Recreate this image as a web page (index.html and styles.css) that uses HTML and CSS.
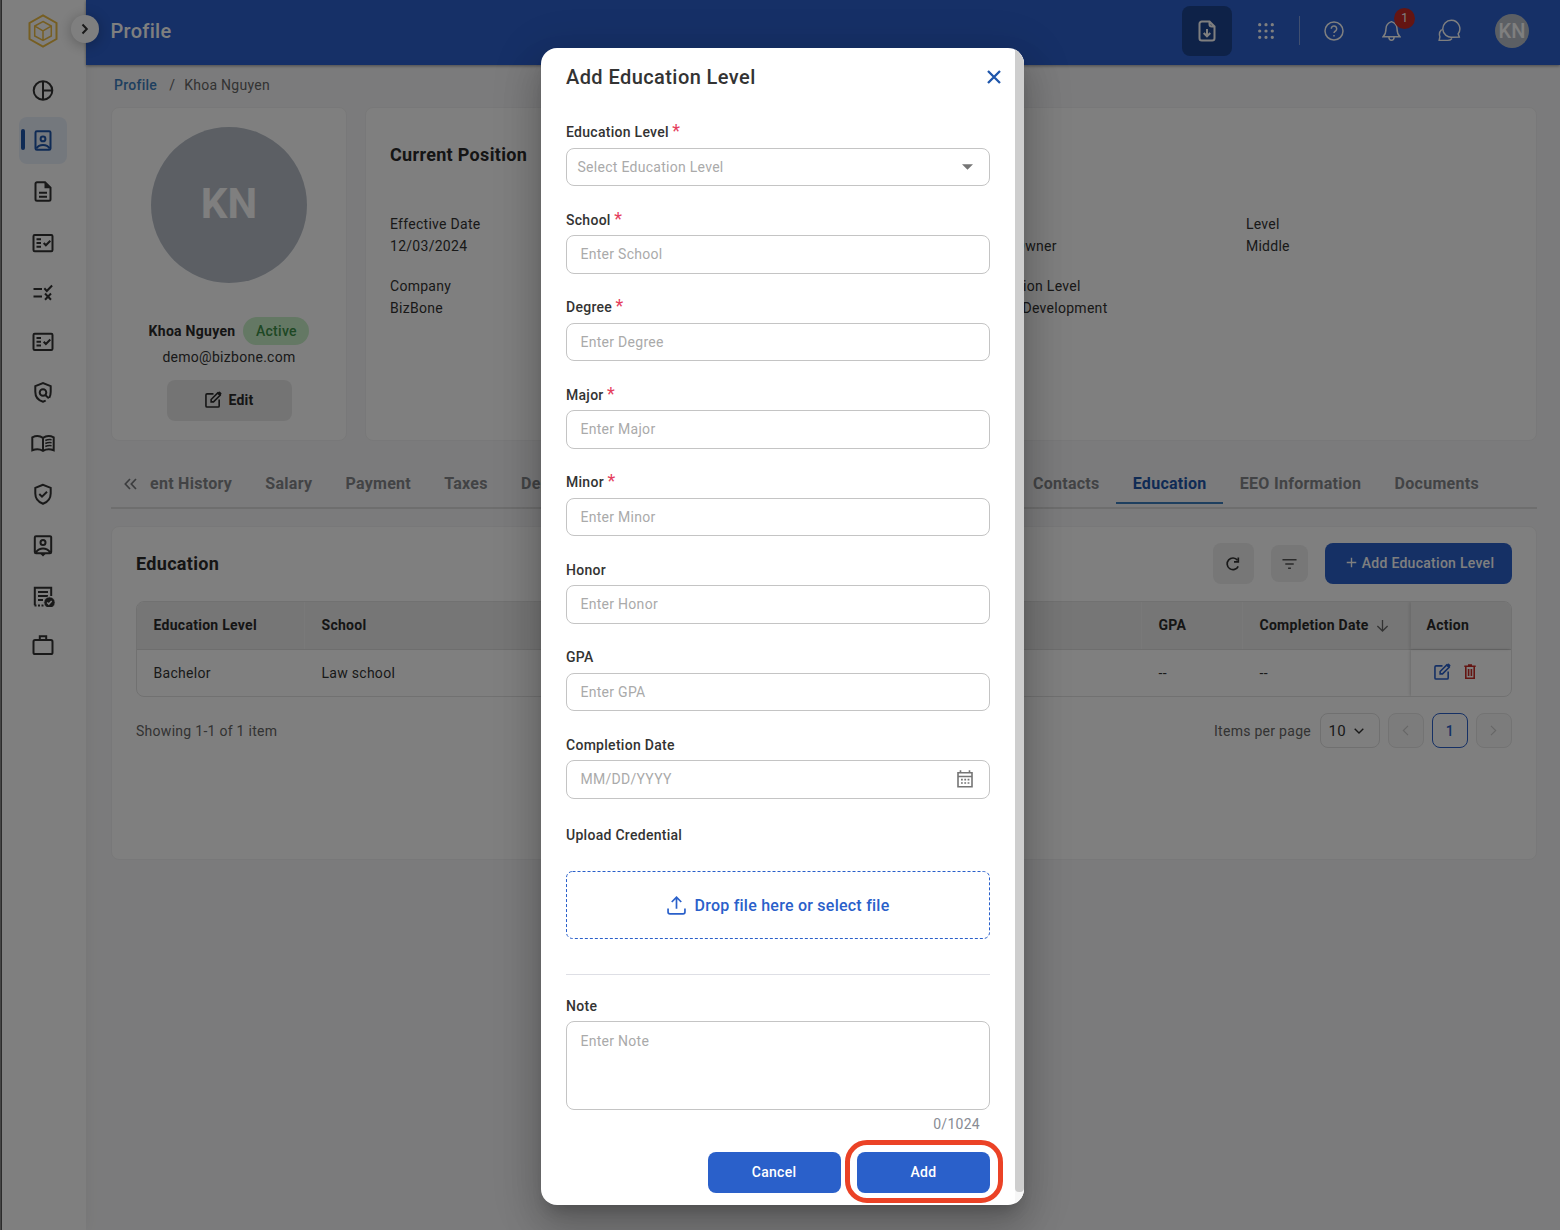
FILE: index.html
```html
<!DOCTYPE html>
<html lang="en">
<head>
<meta charset="utf-8">
<title>Profile</title>
<link rel="stylesheet" href="styles.css">
</head>
<body>
<div class="app">
  <aside class="sidebar">
    <svg class="logo" viewBox="0 0 30 34"><path d="M15 1.300 28.500 9v16L15 32.700 1.500 25V9z" stroke-width="2"/><path d="M15 7.500 23.300 12v10L15 26.500 6.700 22V12zM6.900 12.200 15 16.800l8.100-4.600M15 16.800v9.500" stroke-width="1.500"/></svg>
    <nav class="nav">
      <a class="nav-item"><svg viewBox="0 -0.500 24 24"><circle cx="12" cy="12" r="9.300"/><path d="M12 2.700v18.600M12 12h9.300"/></svg></a>
      <a class="nav-item active"><svg viewBox="0 -0.500 24 24"><rect x="4.500" y="2.700" width="15" height="18.600" rx="1.400"/><circle cx="12" cy="10.400" r="2.400"/><path d="M5.300 20c1.600-2.600 4-3.400 6.700-3.400s5.100.8 6.700 3.400"/></svg></a>
      <a class="nav-item"><svg viewBox="0 -0.500 24 24"><path d="M14 2.700H6A1.500 1.500 0 0 0 4.500 4.200v15.600A1.500 1.500 0 0 0 6 21.300h12a1.500 1.500 0 0 0 1.500-1.500V8.200zM8 13.200h8M8 17.200h8"/><path class="solid" d="M13.500 3v5.700h5.700z"/></svg></a>
      <a class="nav-item"><svg viewBox="0 -1 24 24"><rect x="2.500" y="4" width="19" height="16.200" rx="1.200"/><path d="M5.500 8.200H10M5.500 12H10M5.500 15.800H10M12.700 12l2.200 2.300 4.400-4.500"/></svg></a>
      <a class="nav-item"><svg viewBox="0 -0.500 24 24"><path d="M2.500 8.500H11M2.500 16H11M13.300 7.800l2.500 2.700 5.300-5.500M14 13l6 6.200M20 13l-6 6.200"/></svg></a>
      <a class="nav-item"><svg viewBox="0 1.300 24 24"><rect x="2.500" y="4" width="19" height="16.200" rx="1.200"/><path d="M5.500 8.200H10M5.500 12H10M5.500 15.800H10M12.700 12l2.200 2.300 4.400-4.500"/></svg></a>
      <a class="nav-item"><svg viewBox="0 1 24 24"><path d="M17.800 18.400 14.300 15M18.300 17.800c1-1.800 1.400-3.800 1.400-6.100V6.200L12 3 4.300 6.200v5.500c0 5.300 3.300 8.700 7.700 10 1-.3 1.900-.7 2.700-1.200"/><circle cx="12" cy="12.500" r="3.300"/></svg></a>
      <a class="nav-item"><svg class="book" viewBox="0 0.500 24 24"><path d="M12 6.300C9 4.300 4.500 4.300 1.300 5.800v13c3.500-1.300 7.700-1.200 10.700.6 3-1.800 7.200-1.900 10.700-.6v-13C19.500 4.300 15 4.300 12 6.300zv13"/><path d="M14.300 9c2-.9 4-1.100 6.300-.8M14.300 12c2-.9 4-1.100 6.300-.8M14.300 15c2-.9 4-1.100 6.300-.8" stroke-width="1.500"/></svg></a>
      <a class="nav-item"><svg viewBox="0 0 24 24"><path d="M12 2.800 4.300 5.900v5.500c0 5 3 8.500 7.700 10.400 4.700-1.900 7.700-5.400 7.700-10.400V5.900zM8.300 12l2.700 2.700 5-5"/></svg></a>
      <a class="nav-item"><svg viewBox="0 -0.500 24 24"><path d="M5 2.700h14a1.200 1.200 0 0 1 1.200 1.200v14.600a1.200 1.200 0 0 1-1.200 1.200H5a1.200 1.200 0 0 1-1.200-1.200V3.900A1.200 1.200 0 0 1 5 2.700zM5 18.700c2-2.600 4-3.600 7-3.600s5 1 7 3.600"/><circle cx="12" cy="9" r="2.500"/><path class="solid" d="m9 20 3 3 3-3z"/></svg></a>
      <a class="nav-item"><svg viewBox="0 -2 24 24"><path d="M20.200 11V2.700H3.800v17.600M7 7h10M7 11h10M7 15h5"/><path d="M3.500 20.500h9" stroke-dasharray="2 1.500"/><circle class="disc" cx="18.500" cy="17.500" r="5.700"/><path class="light" d="m16.200 17.500 1.600 1.600 2.900-3"/></svg></a>
      <a class="nav-item"><svg viewBox="0 0.800 24 24"><rect x="2.500" y="6.900" width="19" height="14" rx="1.600"/><path d="M8.800 6.500V3h6.400v3.500"/></svg></a>
    </nav>
  </aside>
  <div class="page">
    <header class="topbar">
      <h1>Profile</h1>
      <div class="tools">
        <span class="tool-btn"><svg viewBox="0 0 24 24"><path d="M14.500 2.500H6.800A2.300 2.300 0 0 0 4.500 4.800v14.400A2.300 2.300 0 0 0 6.800 21.500h10.400a2.300 2.300 0 0 0 2.300-2.300V7.500zv2.700A2.300 2.300 0 0 0 16.800 7.500h2.700M12 10v7M8.700 14l3.300 3.300 3.300-3.300" stroke-width="2"/></svg></span>
        <svg class="t-grid" viewBox="0 0 20 20"><path d="M3 3h.01M10 3h.01M17 3h.01M3 10h.01M10 10h.01M17 10h.01M3 17h.01M10 17h.01M17 17h.01" stroke-width="3.600" stroke-linecap="round"/></svg>
        <i class="sep"></i>
        <svg class="t-help" viewBox="0 0 20 20"><circle cx="10" cy="10" r="9"/><path d="M7.300 7.800a2.700 2.700 0 1 1 4.400 2c-1 .8-1.700 1.100-1.700 2.300M10 14v1.600"/></svg>
        <span class="bell"><svg viewBox="0 0 20 22"><path d="M10 1.200C6.800 2.300 4.300 4.300 4.200 8.500c0 4-.8 6.200-3.100 8.600h17.800c-2.300-2.400-3.100-4.600-3.100-8.600C15.700 4.300 13.200 2.300 10 1.200zM7.200 17.300c.2 4.600 5.400 4.600 5.600 0"/></svg><b>1</b></span>
        <svg class="t-chat" viewBox="0 0 24 24"><path d="M14 1.300a8.900 8.900 0 1 0 1.200 17.700l7-.1-1.200-3.400A8.900 8.900 0 0 0 14 1.300z"/><path d="M3.800 11C1.300 13.500 1 16 2 18.500L1.200 22.300H10c2 0 3.500-.7 4.600-2"/></svg>
        <span class="avatar-sm">KN</span>
      </div>
    </header>
    <main class="content">
      <div class="crumbs"><a>Profile</a><span>/</span><span>Khoa Nguyen</span></div>
      <div class="cards">
        <section class="card person">
          <div class="avatar">KN</div>
          <div class="who"><strong>Khoa Nguyen</strong><span class="pill">Active</span></div>
          <div class="mail">demo@bizbone.com</div>
          <button class="edit"><svg viewBox="0 0 18 18"><path d="M9 3H2.200A1.200 1.200 0 0 0 1 4.200v11.600A1.200 1.200 0 0 0 2.200 17h11.600a1.200 1.200 0 0 0 1.200-1.200V9"/><path d="M6.500 11.500V9l7-7 2.500 2.500-7 7z"/><path class="solid" d="m13 2.300 1.500-1.500a1 1 0 0 1 1.400 0l1.300 1.300a1 1 0 0 1 0 1.400L15.700 5z"/></svg>Edit</button>
        </section>
        <section class="card position">
          <h2>Current Position</h2>
          <dl>
            <div><dt>Effective Date</dt><dd>12/03/2024</dd></div>
            <div><dt>Job Title</dt><dd>Developer</dd></div>
            <div><dt>Position</dt><dd>Product Owner</dd></div>
            <div><dt>Level</dt><dd>Middle</dd></div>
            <div><dt>Company</dt><dd>BizBone</dd></div>
            <div><dt>Department</dt><dd>Product</dd></div>
            <div><dt>Organization Level</dt><dd>Software Development</dd></div>
          </dl>
        </section>
      </div>
      <div class="tabs">
        <svg class="more" viewBox="0 0 13 12"><path d="M6 1 1.300 6 6 11M12 1 7.300 6l4.700 5"/></svg>
        <span class="tab first">ent History</span><span class="tab">Salary</span><span class="tab">Payment</span><span class="tab">Taxes</span><span class="tab">Dependents</span>
        <span class="tab contacts">Contacts</span><span class="tab on">Education</span><span class="tab">EEO Information</span><span class="tab">Documents</span>
      </div>
      <section class="card education">
        <div class="edu-head">
          <h2>Education</h2>
          <span class="sq refresh"><svg viewBox="0 0 16 16"><path d="M13.200 10.300A5.800 5.800 0 1 1 12.500 4.200"/><path d="M13.300 1.600v4.200H9"/></svg></span>
          <span class="sq filter"><svg viewBox="0 0 16 12"><path d="M.5 1.500h15M3.500 6h9M6.500 10.500h3"/></svg></span>
          <button class="primary add-edu"><svg viewBox="0 0 12 12"><path d="M6 .8v10.400M.8 6h10.400"/></svg>Add Education Level</button>
        </div>
        <div class="table">
          <div class="tr th"><span>Education Level</span><span>School</span><span>GPA</span><span>Completion Date<svg viewBox="0 0 14 14"><path d="M7 1v12M1.500 7.500 7 13l5.500-5.500"/></svg></span><span>Action</span></div>
          <div class="tr"><span>Bachelor</span><span>Law school</span><span>--</span><span>--</span><span class="acts"><svg class="pen" viewBox="0 0 18 18"><path d="M9 3H2.200A1.200 1.200 0 0 0 1 4.200v11.600A1.200 1.200 0 0 0 2.200 17h11.600a1.200 1.200 0 0 0 1.200-1.200V9"/><path d="M6.500 11.500V9l7-7 2.500 2.500-7 7z"/><path class="solid" d="m13 2.300 1.500-1.500a1 1 0 0 1 1.400 0l1.300 1.300a1 1 0 0 1 0 1.400L15.700 5z"/></svg><svg class="bin" viewBox="0 0 12 15"><path d="M.3 2.200h11.400M4 1h4M1.800 2.500v11.700h8.400V2.500M4.600 5v7M7.400 5v7"/></svg></span></div>
        </div>
        <div class="pager">
          <span class="showing">Showing 1-1 of 1 item</span>
          <span class="ipp">Items per page</span>
          <span class="size">10<svg viewBox="0 0 10 6"><path d="m.7.700 4.300 4.300L9.300.7"/></svg></span>
          <span class="pg off"><svg viewBox="0 0 6 10"><path d="M5.300.7 1 5l4.300 4.300"/></svg></span>
          <span class="pg cur">1</span>
          <span class="pg off"><svg viewBox="0 0 6 10"><path d="M.7.700 5 5 .7 9.300"/></svg></span>
        </div>
      </section>
    </main>
  </div>
  <span class="collapse"><svg viewBox="0 0 8 12"><path d="m1.500 1.500 4.300 4.500-4.300 4.500"/></svg></span>
</div>
<div class="backdrop"></div>
<div class="edge"></div>
<div class="dialog">
  <form class="form">
    <div class="d-head"><h3>Add Education Level</h3><svg viewBox="0 0 14 14"><path d="m1 1 12 12M13 1 1 13"/></svg></div>
    <div class="field"><label>Education Level<em>*</em></label><div class="input select">Select Education Level<svg viewBox="0 0 11 6"><path d="M0 .2h11L5.500 5.800z"/></svg></div></div>
    <div class="field"><label>School<em>*</em></label><div class="input">Enter School</div></div>
    <div class="field"><label>Degree<em>*</em></label><div class="input">Enter Degree</div></div>
    <div class="field"><label>Major<em>*</em></label><div class="input">Enter Major</div></div>
    <div class="field"><label>Minor<em>*</em></label><div class="input">Enter Minor</div></div>
    <div class="field"><label>Honor</label><div class="input">Enter Honor</div></div>
    <div class="field"><label>GPA</label><div class="input">Enter GPA</div></div>
    <div class="field"><label>Completion Date</label><div class="input date">MM/DD/YYYY<svg viewBox="0 0 16 18"><path d="M1 2.800h14v13.900H1zM1 6.500h14M3.500.3v2.500M12.500.3v2.500"/><path d="M4 9.600h8.500M4 13h8.500" stroke-width="1.700" stroke-dasharray="1.800 1.500"/></svg></div></div>
    <div class="upload-label">Upload Credential</div>
    <div class="drop"><svg class="dash" width="424" height="68"><rect x=".5" y=".5" width="423" height="67" rx="6"/></svg><svg class="up" viewBox="0 0 18 18"><path d="M9 12V1.200M4.500 5.700 9 1.200l4.500 4.500M1 11.800v3.400A1.800 1.800 0 0 0 2.800 17h12.400a1.800 1.800 0 0 0 1.800-1.800v-3.400"/></svg><span>Drop file here or select file</span></div>
    <hr>
    <div class="note-label">Note</div>
    <div class="note">Enter Note</div>
    <div class="count">0/1024</div>
    <div class="actions"><button type="button" class="primary">Cancel</button><button type="button" class="primary ringed">Add</button></div>
  </form>
  <div class="scroll"><i></i></div>
</div>
</body>
</html>
```
FILE: styles.css
```css
* { box-sizing: border-box; }
body { margin: 0; font: 14px/20px Roboto, sans-serif; letter-spacing: .28px; color: #333; overflow: hidden; }
h1, h2, h3, dl, dd { margin: 0; }
button { border: 0; font: inherit; letter-spacing: inherit; padding: 0; }
svg { display: block; fill: none; stroke: currentColor; flex: none; }
svg .solid { fill: currentColor; stroke: none; }

.app { display: flex; width: 1560px; height: 1230px; background: #f7f7f8; position: relative; }
.sidebar { width: 85.500px; background: #fff; display: flex; flex-direction: column; align-items: center; padding-top: 14px; box-shadow: 0 0 14px rgba(0,0,0,.06); }
.logo { width: 30px; height: 34px; color: #ecbd45; }
.nav { display: flex; flex-direction: column; gap: 4.050px; padding-top: 18.700px; }
.nav-item { width: 48px; height: 46.500px; border-radius: 8px; display: flex; align-items: center; justify-content: center; }
.nav-item svg { width: 24px; height: 24px; stroke-width: 2; }
.nav-item .disc { fill: currentColor; stroke: #fff; stroke-width: 1; }
.nav-item .light { stroke: #fff; stroke-width: 1.500; }
.nav-item.active { background: #e9f0fb; color: #1f56ab; position: relative; }
.nav-item.active::before { content: ""; position: absolute; left: 2.500px; top: 11.500px; width: 4px; height: 21px; border-radius: 2px; background: #1f56ab; }
.collapse { position: absolute; left: 71px; top: 15px; width: 28px; height: 28px; border-radius: 50%; background: #fff; box-shadow: 0 2px 14px rgba(0,0,0,.28); display: flex; align-items: center; justify-content: center; }
.collapse svg { width: 8px; height: 12px; stroke-width: 2; }

.page { flex: 1; min-width: 0; }
.topbar { height: 65px; background: #2c60ce; color: #fff; display: flex; align-items: center; justify-content: space-between; padding: 0 31px 4px 25px; box-shadow: 0 1px 3px rgba(0,0,0,.4); }
.topbar h1 { font-size: 20px; font-weight: 500; line-height: 24px; letter-spacing: .3px; }
.tools { display: flex; align-items: center; }
.tool-btn { width: 49.500px; height: 50px; border-radius: 8px; background: #1c4491; display: flex; align-items: center; justify-content: center; }
.tool-btn svg { width: 24px; height: 24px; }
.t-grid { width: 18px; height: 18px; margin-left: 25px; }
.sep { width: 1px; height: 29px; background: #809fe0; margin: 0 24px 0 24px; }
.t-help { width: 20px; height: 20px; stroke-width: 1.500; }
.bell { position: relative; margin-left: 38.500px; }
.bell svg { width: 19px; height: 22px; stroke-width: 1.500; }
.bell b { position: absolute; left: 12px; top: -12px; width: 21px; height: 21px; border-radius: 50%; background: #c82a24; font: 12px/21px Roboto, sans-serif; letter-spacing: 0; text-align: center; }
.t-chat { width: 23px; height: 23px; margin-left: 37px; stroke-width: 1.500; }
.avatar-sm { width: 34px; height: 34px; border-radius: 50%; background: #b8bfc9; font-size: 20px; font-weight: 500; line-height: 34px; text-align: center; letter-spacing: 0; margin-left: 34px; }

.content { padding: 0 23.500px 0 25.500px; }
.crumbs { display: flex; gap: 9px; padding: 10px 0 0 3px; color: #666; height: 42px; letter-spacing: .27px; }
.crumbs a { color: #3d7ebf; font-weight: 500; margin-right: 3px; }
.card { background: #fff; border: 1px solid #f1f1f2; border-radius: 8px; }
.cards { display: flex; gap: 17.500px; height: 334px; }
.person { width: 236px; display: flex; flex-direction: column; align-items: center; padding-top: 19px; }
.avatar { width: 156px; height: 156px; border-radius: 50%; background: #b8bfc9; color: #fff; font-size: 42px; font-weight: 700; line-height: 154px; letter-spacing: 0; text-align: center; }
.who { display: flex; align-items: center; gap: 8px; margin-top: 34px; color: #2a2a2a; }
.who strong { font-weight: 700; }
.pill { width: 66px; height: 28px; line-height: 28px; border-radius: 14px; background: #c9f0c9; color: #3d9149; text-align: center; font-weight: 500; }
.mail { margin-top: 2px; }
.edit { width: 125px; height: 41px; margin-top: 13px; border-radius: 8px; background: #e9e9e9; color: #2a2a2a; font-weight: 700; display: flex; align-items: center; justify-content: center; gap: 6px; padding: 0 0 2px 1px; }
.edit svg { width: 17px; height: 17px; stroke-width: 1.700; }
.position { flex: 1; padding: 36px 0 0 24.500px; }
h2 { font-size: 18px; line-height: 22px; font-weight: 700; letter-spacing: .32px; color: #2a2a2a; }
.position dl { display: grid; grid-template-columns: repeat(4, 285.300px); row-gap: 18px; margin-top: 47px; line-height: 22px; }

.tabs { display: flex; align-items: center; height: 67.500px; border-bottom: 2px solid #dcdcdc; font-size: 16px; font-weight: 700; color: #85878b; padding: 20px 0 0 13px; }
.more { width: 13px; height: 12px; stroke-width: 1.700; color: #77797d; margin-right: 13px; }
.tab { padding: 0 16.600px; height: 40px; line-height: 40px; white-space: nowrap; }
.tab.first { padding-left: 0; }
.tab.contacts { margin-left: auto; }
.tab:last-child { margin-right: 41px; }
.tab.on { color: #1f56ab; border-bottom: 2px solid #3d7ebf; }

.education { margin-top: 17.500px; height: 334px; padding: 15.500px 24px; }
.edu-head { display: flex; align-items: center; height: 42px; }
.edu-head h2 { flex: 1; }
.sq { background: #eee; border-radius: 8px; display: flex; align-items: center; justify-content: center; }
.refresh { width: 41px; height: 41px; margin-right: 17px; }
.refresh svg { width: 16px; height: 16px; stroke-width: 1.700; }
.filter { width: 37px; height: 37px; margin-right: 17px; }
.filter svg { width: 15px; height: 12px; stroke-width: 1.600; color: #555; }
.primary { background: #2a60ca; color: #fff; border-radius: 8px; font-weight: 500; }
.add-edu { width: 187px; height: 41.500px; display: flex; align-items: center; justify-content: center; gap: 5px; padding: 0 0 2px 4px; }
.add-edu svg { width: 11px; height: 11px; stroke-width: 1.500; }
.table { margin-top: 16px; height: 96px; border: 1px solid #e3e3e3; border-radius: 8px; overflow: hidden; }
.tr { display: grid; grid-template-columns: 168px 837px 101px 168px 1fr; height: 46px; line-height: 46px; }
.tr > span { padding-left: 16.500px; display: flex; align-items: center; }
.th { height: 48px; line-height: 47px; background: #ececec; font-weight: 700; border-bottom: 1px solid #ddd; color: #2a2a2a; }
.th > span:not(:last-child) { border-right: 1px solid #f3f3f3; }
.tr > span:last-child { box-shadow: -1px 0 3px rgba(0,0,0,.16); padding-left: 15.500px; }
.th svg { width: 13px; height: 13px; margin-left: 7px; color: #666; stroke-width: 1.400; }
.tr > .acts:last-child { padding: 0 0 2px 23px; gap: 13px; }
.pen { width: 17px; height: 17px; color: #2a60ca; stroke-width: 1.700; }
.bin { width: 12px; height: 15px; color: #c82a24; stroke-width: 1.600; }
.pager { display: flex; align-items: center; margin-top: 15.500px; color: #666; height: 37px; }
.showing { flex: 1; }
.size { width: 60px; height: 35px; border: 1px solid #e0e0e0; border-radius: 8px; margin: 0 8.500px; display: flex; align-items: center; gap: 8px; padding-left: 8px; color: #333; font-size: 15px; }
.size svg { width: 10px; height: 6px; stroke-width: 1.400; }
.pg { width: 35.500px; height: 35px; border-radius: 8px; display: flex; align-items: center; justify-content: center; border: 1px solid #e6e6e6; }
.pg.off { background: #f8f8f8; color: #ccc; }
.pg.off svg { width: 7px; height: 11px; }
.pg.cur { border-color: #2a60ca; color: #2a60ca; font-weight: 500; margin: 0 8.500px; }

.backdrop { position: absolute; inset: 0; background: rgba(0,0,0,.5); }
.edge { position: absolute; left: 0; top: 0; width: 2px; height: 1230px; background: #454545; border-right: 1px solid #2b2b2b; }
.dialog { position: absolute; left: 541px; top: 48px; width: 482.500px; height: 1157px; background: #fff; border-radius: 16px; overflow: hidden; display: flex; box-shadow: 0 11px 15px -7px rgba(0,0,0,.2), 0 24px 38px 3px rgba(0,0,0,.14), 0 9px 46px 8px rgba(0,0,0,.12); }
.form { width: 474px; padding: 0 25px; }
.scroll { flex: 1; background: #f7f7f7; }
.scroll i { display: block; height: 1144px; background: #cecece; border-radius: 0 0 4px 4px; }
.d-head { height: 74px; padding-top: 17px; display: flex; justify-content: space-between; }
.d-head h3 { font-size: 20px; line-height: 24px; font-weight: 500; letter-spacing: .42px; }
.d-head svg { width: 14px; height: 14px; margin: 5px -11px 0 0; color: #1f56ab; stroke-width: 2.300; }
.field { height: 87.500px; }
.field label { display: flex; height: 25.500px; font-weight: 500; white-space: nowrap; }
.field em { color: #e5405e; font: 400 18px/18px Roboto, sans-serif; margin-left: 3.500px; }
.input { height: 38.500px; border: 1px solid #c4c4c4; border-radius: 8px; padding: 0 16px 0 13.500px; color: #aaa; display: flex; align-items: center; justify-content: space-between; line-height: 36px; }
.select { padding-left: 10.500px; }
.select svg { width: 11px; height: 6px; fill: #757575; stroke: none; }
.input.date svg { width: 16px; height: 18px; color: #757575; stroke-width: 1.600; }
.upload-label { font-weight: 500; margin-top: 3px; height: 46px; }
.drop { height: 68px; position: relative; display: flex; align-items: center; justify-content: center; gap: 9px; color: #2a60ca; font-size: 16px; font-weight: 500; letter-spacing: .24px; }
.drop span { padding-top: 1px; }
.dash { position: absolute; inset: 0; stroke-dasharray: 3 2; stroke-width: 1; }
.up { width: 19px; height: 19px; stroke-width: 1.600; }
hr { border: 0; border-top: 1px solid #dedfe5; margin: 35px 0 21px; }
.note-label { font-weight: 500; height: 25px; }
.note { height: 89px; border: 1px solid #c4c4c4; border-radius: 8px; padding: 9px 13.500px; color: #aaa; }
.count { text-align: right; padding-right: 10px; margin-top: 4px; color: #888c94; height: 37.500px; }
.actions { display: flex; justify-content: flex-end; gap: 16.500px; }
.actions .primary { width: 133px; height: 41.500px; }
.ringed { position: relative; }
.ringed::after { content: ""; position: absolute; inset: -12px -13px -10px -12px; border: 5px solid #eb4226; border-radius: 22px; }
```
